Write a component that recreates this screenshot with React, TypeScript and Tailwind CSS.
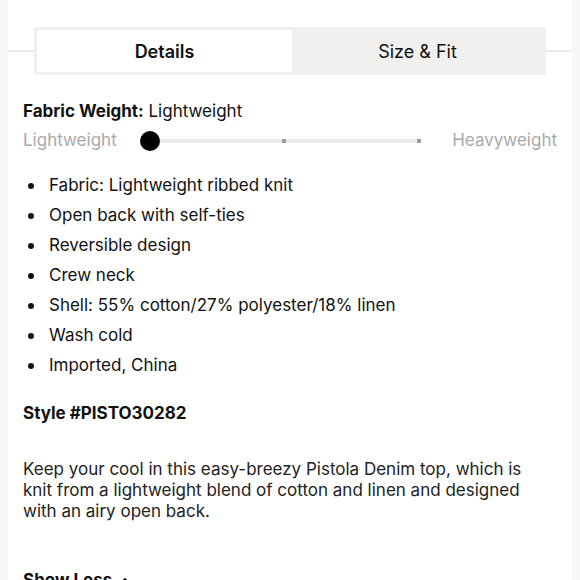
import React from "react";

const bullets = [
  "Fabric: Lightweight ribbed knit",
  "Open back with self-ties",
  "Reversible design",
  "Crew neck",
  "Shell: 55% cotton/27% polyester/18% linen",
  "Wash cold",
  "Imported, China",
];

export default function App() {
  return (
    <div
      className="w-[580px] h-[580px] overflow-hidden bg-[#f7f7f7] flex text-[#111]"
      style={{ fontFamily: "Inter, 'Noto Sans', sans-serif" }}
    >
      <div className="ml-[8px] w-[564px] h-full bg-white flex flex-col">
        <div className="mt-[27px] flex items-center">
          <div className="flex-1 h-[2px] bg-[#ebebeb]" />
          <div className="w-[512px] h-[48px] p-[3px] bg-[#f1f0ef] rounded-[3px] flex">
            <div className="w-[255px] bg-white rounded-[2px] flex items-center justify-center text-[18px] font-semibold pt-[1px]">
              Details
            </div>
            <div className="flex-1 flex items-center justify-center text-[18px] pt-[1px]">
              Size &amp; Fit
            </div>
          </div>
          <div className="flex-1 h-[2px] bg-[#ebebeb]" />
        </div>

        <div className="px-[15px]">
          <div className="mt-[24px] text-[17px] leading-[24px]">
            <span className="font-bold">Fabric Weight:</span> Lightweight
          </div>
          <div className="mt-[8px] flex items-center h-[20px]">
            <span className="text-[17px] text-[#a9a9a9] w-[117px]">Lightweight</span>
            <div className="relative w-[282px] h-[20px] flex items-center">
              <div className="ml-[10px] flex-1 h-[4px] bg-[#ececec] relative">
                <div className="absolute left-[132px] top-0 w-[4px] h-[4px] bg-[#9d9d9d]" />
                <div className="absolute right-0 top-0 w-[4px] h-[4px] bg-[#9d9d9d]" />
              </div>
              <div className="absolute left-0 top-0 w-[20px] h-[20px] rounded-full bg-black" />
            </div>
            <span className="ml-[31px] text-[17px] text-[#a9a9a9]">Heavyweight</span>
          </div>

          <ul className="mt-[20px]">
            {bullets.map((b) => (
              <li key={b} className="flex items-center h-[30px] text-[17px]">
                <span className="w-[6px] h-[6px] rounded-full bg-[#111] ml-[5px] mr-[15px]" />
                {b}
              </li>
            ))}
          </ul>

          <div className="mt-[20px] text-[17px] font-bold">Style #PISTO30282</div>

          <p className="mt-[32px] w-[517px] text-[17px] leading-[21px] text-[#222]">
            Keep your cool in this easy-breezy Pistola Denim top, which is knit from a lightweight blend of cotton and
            linen and designed with an airy open back.
          </p>

          <div className="mt-[46px] text-[17px] font-bold flex items-center gap-[8px]">
            Show Less
            <svg width="10" height="8" viewBox="0 0 10 8" fill="none">
              <path d="M2 6 L5 3 L8 6" stroke="#111" strokeWidth="1.8" />
            </svg>
          </div>
        </div>
      </div>
    </div>
  );
}
